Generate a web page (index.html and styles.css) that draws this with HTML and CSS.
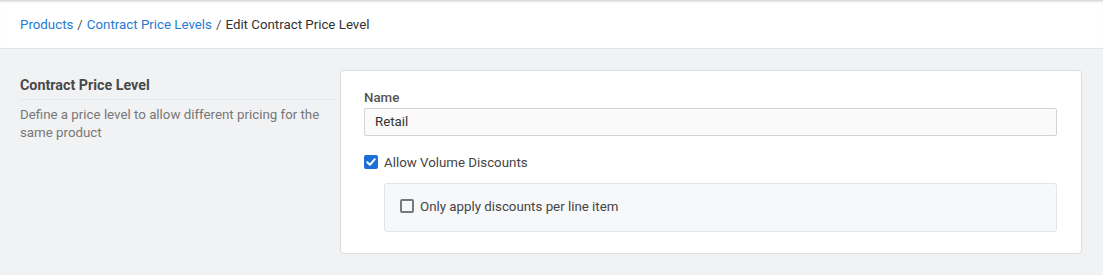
FILE: index.html
```html
<!DOCTYPE html>
<html>
<head>
<meta charset="utf-8">
<link rel="stylesheet" href="styles.css">
</head>
<body>
<header class="topbar">
  <nav class="crumbs">
    <a class="crumb-link" href="#">Products</a>
    <span class="sep">/</span>
    <a class="crumb-link" href="#">Contract Price Levels</a>
    <span class="sep">/</span>
    <span class="crumb-current">Edit Contract Price Level</span>
  </nav>
</header>
<main class="content">
  <section class="intro">
    <h2 class="intro-title">Contract Price Level</h2>
    <p class="intro-text">Define a price level to allow different pricing for the same product</p>
  </section>
  <section class="card">
    <label class="field-label">Name</label>
    <div class="input">Retail</div>
    <div class="check-row">
      <span class="box checked">
        <svg viewBox="0 0 14 14" width="14" height="14"><path d="M3.2 7.2 L5.9 9.8 L10.8 4.2" fill="none" stroke="#fff" stroke-width="2" stroke-linecap="round" stroke-linejoin="round"/></svg>
      </span>
      <span class="check-label">Allow Volume Discounts</span>
    </div>
    <div class="subpanel">
      <div class="check-row sub">
        <span class="box"></span>
        <span class="check-label">Only apply discounts per line item</span>
      </div>
    </div>
  </section>
</main>
</body>
</html>
```

FILE: styles.css
```css
html, body {
  margin: 0;
  padding: 0;
}
body {
  background: #f1f2f4;
  font-family: Roboto, "Liberation Sans", Arial, sans-serif;
  font-size: 13.3px;
  color: #333;
}
.topbar {
  background: #fff;
  height: 48px;
  border-bottom: 1px solid #e2e3e6;
  box-shadow: inset 0 3px 3px -2px rgba(0,0,0,0.22);
  display: flex;
  align-items: center;
  padding: 0 20px;
}
.crumbs {
  display: flex;
  align-items: center;
  gap: 4px;
  font-size: 13.3px;
  line-height: 16px;
  padding-top: 2px;
}
.crumb-link {
  color: #1f7bd4;
  text-decoration: none;
}
.sep {
  color: #555;
}
.crumb-current {
  color: #333;
}
.content {
  display: grid;
  grid-template-columns: 315px 1fr;
  column-gap: 5px;
  padding: 21px 21px 0 20px;
}
.intro {
  padding-top: 6px;
}
.intro-title {
  margin: 0;
  font-size: 14.3px;
  font-weight: 700;
  color: #4a4a4a;
  line-height: 18px;
  padding-bottom: 5px;
  border-bottom: 1px dotted #dcdde0;
}
.intro-text {
  margin: 6px 0 0;
  color: #777;
  font-size: 13.3px;
  line-height: 18px;
}
.card {
  background: #fff;
  border: 1px solid #dcdde0;
  border-radius: 4px;
  padding: 19px 24px 21px 23px;
  display: flex;
  flex-direction: column;
}
.field-label {
  font-weight: 500;
  color: #555;
  font-size: 13.3px;
  line-height: 16px;
  margin-bottom: 2px;
}
.input {
  height: 26px;
  border: 1px solid #d3d4d7;
  border-radius: 2px;
  background: #fafafa;
  color: #333;
  font-size: 13.3px;
  line-height: 26px;
  padding: 0 10px;
}
.check-row {
  display: flex;
  align-items: center;
  gap: 6px;
  margin-top: 18px;
  height: 16px;
}
.check-label {
  color: #444;
  font-size: 13.3px;
}
.box {
  width: 10px;
  height: 10px;
  border: 2px solid #777780;
  border-radius: 2px;
  display: inline-flex;
  align-items: center;
  justify-content: center;
  flex: none;
}
.box.checked {
  width: 14px;
  height: 14px;
  border: none;
  background: #1d6fd8;
  border-radius: 2px;
}
.subpanel {
  margin: 13px 0 0 20px;
  background: #f7f8fa;
  border: 1px solid #e3e4e7;
  border-radius: 3px;
  padding: 14px 15px 17px;
}
.check-row.sub {
  margin-top: 0;
}
```
